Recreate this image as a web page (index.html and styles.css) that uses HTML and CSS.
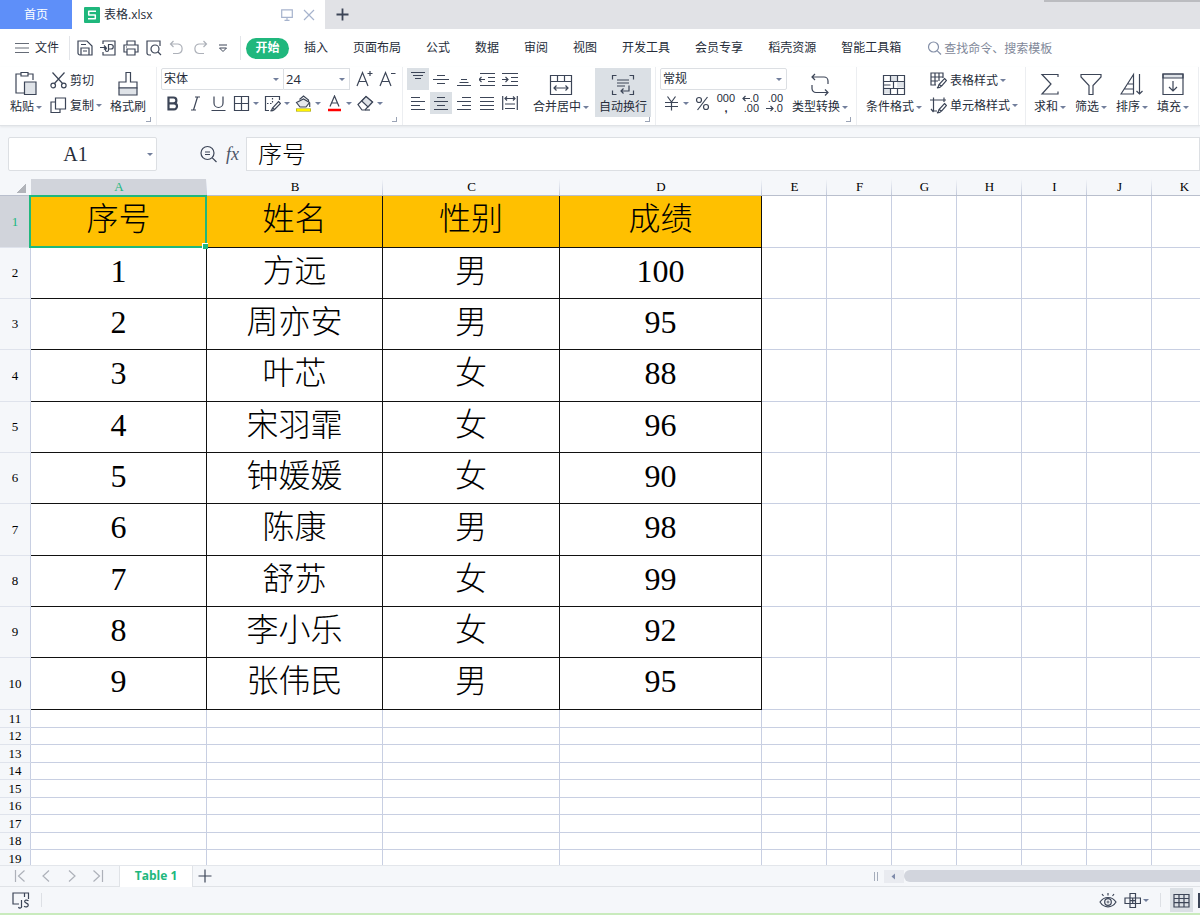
FILE: index.html
```html
<!DOCTYPE html>
<html lang="zh-CN">
<head>
<meta charset="utf-8">
<title>表格.xlsx</title>
<link rel="stylesheet" href="styles.css">
</head>
<body>
<header class="tabs">
  <button class="home-tab">首页</button>
  <div class="doc-tab">
    <svg class="logo" width="16" height="16" viewBox="0 0 16 16"><rect width="16" height="16" rx="1" fill="#1fb77c"/><path d="M12 4.200H4.700V8H11.300V11.800H4" fill="none" stroke="#fff" stroke-width="1.500" stroke-linejoin="round"/></svg>
    <span class="doc-name">表格.xlsx</span>
    <button class="plain" aria-label="窗口"><svg class="ic pale" width="12" height="12" viewBox="0 0 12 12"><path d="M.7.8h10.600v7.500H.7zM6 8.300v2.900M3.500 11.300h5"/></svg></button>
    <button class="plain" aria-label="关闭"><svg class="ic pale" width="12" height="12" viewBox="0 0 12 12"><path d="M1 1l10 10M11 1L1 11"/></svg></button>
  </div>
  <button class="plain new-tab" aria-label="新建"><svg class="ic" width="13" height="13" viewBox="0 0 13 13"><path d="M6.500.5v12M.5 6.500h12" stroke-width="1.800"/></svg></button>
  <div class="edge"></div>
</header>

<nav class="menu">
  <button class="file"><svg class="ic gray" width="14" height="12" viewBox="0 0 14 12"><path d="M0 1.500h14M0 6h14M0 10.500h14"/></svg>文件</button>
  <div class="quick">
    <button aria-label="保存"><svg class="ic" width="16" height="16" viewBox="0 0 16 16"><path d="M1 1h9l5 5v9H3a2 2 0 0 1-2-2zM4 15V8h8v7M4 4.500h5M6 11h4"/></svg></button>
    <button aria-label="输出PDF"><svg class="ic" width="16" height="16" viewBox="0 0 16 16"><path d="M3 4V1h12v14H3v-3M0 7.500h6M4 5.500l2 2-2 2M8 4.500h3a2 2 0 0 1 0 4.500H8.500M8.500 4.500v5.500a1.500 1.500 0 1 1-1.500-1.500"/></svg></button>
    <button aria-label="打印"><svg class="ic" width="16" height="16" viewBox="0 0 16 16"><path d="M4 5V1h8v4M4 12H1V5h14v7h-3M4 9h8v6H4zM3 7h1"/></svg></button>
    <button aria-label="打印预览"><svg class="ic" width="16" height="16" viewBox="0 0 16 16"><path d="M5 15H3a2 2 0 0 1-2-2V1h13v5M12 12l3 3"/><circle cx="9" cy="9" r="4"/></svg></button>
    <button aria-label="撤销"><svg class="ic faint" width="16" height="16" viewBox="0 0 16 16"><path d="M4.500 1L1.500 4l3 3M1.500 4H9a4.800 4.800 0 0 1 0 9.500H4"/></svg></button>
    <button aria-label="恢复"><svg class="ic faint" width="16" height="16" viewBox="0 0 16 16"><path d="M11.500 1l3 3-3 3M14.500 4H7a4.800 4.800 0 0 0 0 9.500h5"/></svg></button>
    <button aria-label="自定义"><svg class="ic" width="16" height="16" viewBox="0 0 16 16"><path d="M4 5h8M4.500 8h7L8 11.500z" stroke-width="1"/></svg></button>
  </div>
  <div class="menu-items">
    <button class="current">开始</button><button>插入</button><button>页面布局</button><button>公式</button><button>数据</button><button>审阅</button><button>视图</button><button>开发工具</button><button>会员专享</button><button>稻壳资源</button><button>智能工具箱</button>
  </div>
  <label class="search"><svg class="ic slate" width="16" height="16" viewBox="0 0 16 16"><circle cx="6.500" cy="7" r="5"/><path d="M10.300 10.800l3.700 3.700"/></svg><input type="text" placeholder="查找命令、搜索模板" aria-label="查找命令"></label>
</nav>

<section class="ribbon">
  <div class="group clip">
    <button class="big"><svg class="ic" width="24" height="26" viewBox="0 0 24 26"><path d="M7 3H2v19h8M14 3h5v6"/><path d="M7 1.500h7V5H7z"/><path d="M10.500 11h11.500v12.500H10.500z" fill="#dfe3e8"/></svg><span class="drop">粘贴</span></button>
    <div class="stack">
      <button><svg class="ic" width="17" height="17" viewBox="0 0 17 17"><path d="M2.500.5l10.500 11.500M14.500.5L4 12"/><circle cx="3.200" cy="13.500" r="2.300"/><circle cx="13.800" cy="13.500" r="2.300"/></svg>剪切</button>
      <button><svg class="ic" width="17" height="17" viewBox="0 0 17 17"><path d="M5.500 1h10v11h-10zM5.500 5H1v10.500h9V12"/></svg><span class="drop">复制</span></button>
    </div>
    <button class="big"><svg class="ic" width="22" height="26" viewBox="0 0 22 26"><path d="M9 1.500h4.500V11h6.500v6H2v-6h7z"/><path d="M2 17h18v7H2z" fill="#dfe3e8"/></svg>格式刷</button>
    <i class="launch"></i>
  </div>

  <div class="group font">
    <div class="line">
      <label class="pick face"><select aria-label="字体"><option>宋体</option></select></label><label class="pick size"><select aria-label="字号"><option>24</option></select></label>
      <button aria-label="增大字号"><svg class="ic" width="18" height="18" viewBox="0 0 18 18"><path d="M2 16L7.500 2.500 13 16M4 11.500h7M12.500 3.500h5M15 1v5"/></svg></button>
      <button aria-label="减小字号"><svg class="ic" width="18" height="18" viewBox="0 0 18 18"><path d="M2 16L7.500 2.500 13 16M4 11.500h7M13 3.500h4.500"/></svg></button>
    </div>
    <div class="line tools">
      <button aria-label="加粗"><svg class="ic" width="17" height="17" viewBox="0 0 17 17"><path d="M4.500 2.500h5a2.800 2.800 0 0 1 0 5.800h-5zM4.500 8.300H10a3 3 0 0 1 0 6H4.500z" stroke-width="2.200"/></svg></button>
      <button aria-label="斜体"><svg class="ic" width="17" height="17" viewBox="0 0 17 17"><path d="M8 2h5M4 15h5M10.500 2L6.500 15"/></svg></button>
      <button aria-label="下划线"><svg class="ic" width="17" height="17" viewBox="0 0 17 17"><path d="M4 1.500V8a4.500 4.500 0 0 0 9 0V1.500M1.500 15.500h14"/></svg></button>
      <button class="wide" aria-label="边框"><svg class="ic" width="17" height="17" viewBox="0 0 17 17"><path d="M1.500 1.500h14v14h-14zM8.500 1.500v14M1.500 8.500h14"/></svg></button>
      <button class="wide" aria-label="绘图边框"><svg class="ic" width="17" height="17" viewBox="0 0 17 17"><path d="M5 15.500H1.500v-14h14V5"/><path d="M8.500 3v6M3 8.500h6" stroke-dasharray="1.500 1.500"/><path d="M14.500 6.500l2 2-6 6c-1 1-2 1.500-4 1.500 1.500-.5 1.500-1.500 2-3zM8.500 13l2 1.500"/></svg></button>
      <button class="wide" aria-label="填充颜色"><svg class="ic" width="17" height="17" viewBox="0 0 17 17"><path d="M4.500 4.500L8.500 1l5 4v2.500"/><path d="M1.500 7.500l7-3.500 6 3.500-3.500 4.500H5z" fill="#e6e9ed"/><path d="M14.700 8v4"/><path d="M1 15h15" stroke="#8a8a20" stroke-width="3"/><path d="M1.500 15h14" stroke="#fff200" stroke-width="2.400"/></svg></button>
      <button class="wide" aria-label="字体颜色"><svg class="ic" width="17" height="17" viewBox="0 0 17 17"><path d="M4 11.500L8.500 1 13 11.500M5.500 8h6"/><path d="M2 15h13" stroke="#f00" stroke-width="2.500"/></svg></button>
      <button class="wide" aria-label="清除"><svg class="ic" width="17" height="17" viewBox="0 0 17 17"><path d="M1 9.500L9 1.500l6.500 5.500-7.500 8H5z"/><path d="M9 1.500L15.500 7 11 12 4.700 6z" fill="#dfe3e8"/><path d="M8 15h5"/></svg></button>
    </div>
    <i class="launch"></i>
  </div>

  <div class="group align">
    <div class="align-grid">
      <button class="on" aria-label="顶端对齐"><svg class="ic" width="16" height="16" viewBox="0 0 16 16"><path d="M1 1.500h14M3 4.500h10M5 7.500h6"/></svg></button>
      <button aria-label="垂直居中"><svg class="ic" width="16" height="16" viewBox="0 0 16 16"><path d="M4 4.500h8M0 8.500h16M4 12.500h8"/></svg></button>
      <button aria-label="底端对齐"><svg class="ic" width="16" height="16" viewBox="0 0 16 16"><path d="M5 8.500h6M3.500 11.500h9M1 14.500h14"/></svg></button>
      <button aria-label="减少缩进"><svg class="ic" width="16" height="16" viewBox="0 0 16 16"><path d="M1 2.500h15M9 6.500h7M9 10.500h7M1 14.500h15M0 8.500h6M2.500 6L0 8.500 2.500 11"/></svg></button>
      <button aria-label="增加缩进"><svg class="ic" width="16" height="16" viewBox="0 0 16 16"><path d="M0 2.500h16M9 6.500h7M9 10.500h7M0 14.500h16M0 8.500h6M3.500 6L6 8.500 3.500 11"/></svg></button>
      <button aria-label="左对齐"><svg class="ic" width="16" height="16" viewBox="0 0 16 16"><path d="M1 2.500h9M1 6.500h14M1 10.500h9M1 14.500h14"/></svg></button>
      <button class="on" aria-label="水平居中"><svg class="ic" width="16" height="16" viewBox="0 0 16 16"><path d="M4 2.500h8M1 6.500h14M4 10.500h8M1 14.500h14"/></svg></button>
      <button aria-label="右对齐"><svg class="ic" width="16" height="16" viewBox="0 0 16 16"><path d="M6 2.500h9M1 6.500h14M6 10.500h9M1 14.500h14"/></svg></button>
      <button aria-label="两端对齐"><svg class="ic" width="16" height="16" viewBox="0 0 16 16"><path d="M1 2.500h14M1 6.500h14M1 10.500h14M1 14.500h14"/></svg></button>
      <button aria-label="分散对齐"><svg class="ic" width="16" height="16" viewBox="0 0 16 16"><path d="M.7 1v14M15.300 1v14M3 3.500h10M5 1.500l-2 2 2 2M11 1.500l2 2-2 2M3 9h10M3 13.500h10"/></svg></button>
    </div>
    <button class="big merge"><svg class="ic" width="24" height="26" viewBox="0 0 24 26"><path d="M1.500 4.500h21v19h-21zM1.500 10.500h21M8.500 4.500v6M15.500 4.500v6M5 17h14M7.500 14.500L5 17l2.500 2.500M16.500 14.500L19 17l-2.500 2.500"/></svg><span class="drop">合并居中</span></button>
    <button class="big on wrap"><svg class="ic" width="24" height="26" viewBox="0 0 24 26"><path d="M5.500 4.500h-4v4M18.500 4.500h4v4M1.500 19.500v4h4M22.500 19.500v4h-4M6 9h12M6 12h12M6 15h8M18 14.500V20h-8M12.500 17.500L10 20l2.500 2.500"/></svg>自动换行</button>
    <i class="launch"></i>
  </div>

  <div class="group number">
    <div class="num-col">
      <label class="pick format"><select aria-label="数字格式"><option>常规</option></select></label>
      <div class="line numbers">
        <button class="wide" aria-label="货币"><svg class="ic" width="17" height="17" viewBox="0 0 17 17"><path d="M4.500 1.500l4 5.500 4-5.500M8.500 7v8.500M2 7.500h13M2 11.500h13"/></svg></button>
        <button aria-label="百分比"><svg class="ic" width="17" height="17" viewBox="0 0 17 17"><circle cx="5" cy="5" r="2.500"/><circle cx="12" cy="12" r="2.500"/><path d="M13.500 2L3.500 15"/></svg></button>
        <button class="digits"><span>000</span><b>,</b></button>
        <button class="digits"><span><svg class="ic" width="8" height="7" viewBox="0 0 8 7"><path d="M8 3.500H1M3.500 1L1 3.500 3.500 6"/></svg>.0</span><span>.00</span></button>
        <button class="digits"><span>.00</span><span><svg class="ic" width="8" height="7" viewBox="0 0 8 7"><path d="M0 3.500h7M4.500 1L7 3.500 4.500 6"/></svg>.0</span></button>
      </div>
    </div>
    <button class="big"><svg class="ic" width="24" height="26" viewBox="0 0 24 26"><path d="M7 3L4 6l3 3M4 6h12a4 4 0 0 1 4 4v3M17 18.500l3 3-3 3M20 21.500H8a4 4 0 0 1-4-4V14"/></svg><span class="drop">类型转换</span></button>
    <i class="launch"></i>
  </div>

  <div class="group style">
    <button class="big"><svg class="ic" width="24" height="26" viewBox="0 0 24 26"><path d="M8 4.500h7v6H8zM15 10.500h7v6h-7zM2 16.500h6v6H2z" fill="#dfe3e8" stroke="none"/><path d="M1.500 4.500h21v19h-21zM1.500 10.500h21M1.500 14h7M1.500 17.500h21M8.500 4.500v6M15.500 4.500v6M11.500 10.500v7M8.500 17.500v6M15.500 17.500v6"/></svg><span class="drop">条件格式</span></button>
    <div class="stack">
      <button><svg class="ic" width="17" height="17" viewBox="0 0 17 17"><path d="M6 13H1V1h12v5M1 5h12M1 9h7M5 1v12M9 1v8"/><path d="M14.500 6.500l2 2-5 5.500c-1 1.500-2.500 2-4.500 2 1.500-.5 1.500-2 2-3.500zM9 12.500l2.500 1.500"/></svg><span class="drop">表格样式</span></button>
      <button><svg class="ic" width="17" height="17" viewBox="0 0 17 17"><path d="M3.500.5V14H7M0 3h16M14 .5V5M1 12l2.500 3"/><path d="M14.500 6.500l2 2-5 5.500c-1 1.500-2.500 2-4.500 2 1.500-.5 1.500-2 2-3.500zM9 12.500l2.500 1.500"/></svg><span class="drop">单元格样式</span></button>
    </div>
  </div>

  <div class="group edit">
    <button class="big"><svg class="ic" width="24" height="26" viewBox="0 0 24 26"><path d="M20 6V3.500H4L13 13 4 23h16v-2.500"/></svg><span class="drop">求和</span></button>
    <button class="big"><svg class="ic" width="24" height="26" viewBox="0 0 24 26"><path d="M2 3.500h20V6l-8 8.500v9h-4v-9L2 6z"/></svg><span class="drop">筛选</span></button>
    <button class="big"><svg class="ic" width="24" height="26" viewBox="0 0 24 26"><path d="M1 23L13.500 3.500V23zM4.500 18h9M8 13h5.500M19.500 3v20M16.500 20l3 3 3-3"/></svg><span class="drop">排序</span></button>
    <button class="big"><svg class="ic" width="24" height="26" viewBox="0 0 24 26"><path d="M2 3h20v4H2z" fill="#dfe3e8"/><path d="M2 3h20v20.500H2zM12 10v10M8 16l4 4 4-4"/></svg><span class="drop">填充</span></button>
  </div>
</section>

<section class="formula">
  <label class="pick name"><input type="text" value="A1" aria-label="名称框"></label>
  <div class="fx">
    <button class="plain" aria-label="查看"><svg class="ic" width="18" height="18" viewBox="0 0 18 18"><circle cx="7.500" cy="8" r="6.500"/><path d="M12.300 12.800l4.200 4.200M5 7h5M5 9.500h5"/></svg></button>
    <button class="plain fn">fx</button>
  </div>
  <input class="content" type="text" value="序号" aria-label="编辑栏">
</section>

<main class="sheet">
<table>
<colgroup><col class="c-head"><col class="c-name"><col class="c-name"><col class="c-sex"><col class="c-score"><col class="c-rest" span="7"></colgroup>
<thead><tr><th class="corner"></th><th class="picked">A</th><th>B</th><th>C</th><th>D</th><th>E</th><th>F</th><th>G</th><th>H</th><th>I</th><th>J</th><th>K</th></tr></thead>
<tbody class="data">
<tr class="title"><th class="picked">1</th><td class="cursor">序号</td><td>姓名</td><td>性别</td><td>成绩</td><td></td><td></td><td></td><td></td><td></td><td></td><td></td></tr>
<tr><th>2</th><td>1</td><td>方远</td><td>男</td><td>100</td><td></td><td></td><td></td><td></td><td></td><td></td><td></td></tr>
<tr><th>3</th><td>2</td><td>周亦安</td><td>男</td><td>95</td><td></td><td></td><td></td><td></td><td></td><td></td><td></td></tr>
<tr><th>4</th><td>3</td><td>叶芯</td><td>女</td><td>88</td><td></td><td></td><td></td><td></td><td></td><td></td><td></td></tr>
<tr><th>5</th><td>4</td><td>宋羽霏</td><td>女</td><td>96</td><td></td><td></td><td></td><td></td><td></td><td></td><td></td></tr>
<tr><th>6</th><td>5</td><td>钟媛媛</td><td>女</td><td>90</td><td></td><td></td><td></td><td></td><td></td><td></td><td></td></tr>
<tr><th>7</th><td>6</td><td>陈康</td><td>男</td><td>98</td><td></td><td></td><td></td><td></td><td></td><td></td><td></td></tr>
<tr><th>8</th><td>7</td><td>舒苏</td><td>女</td><td>99</td><td></td><td></td><td></td><td></td><td></td><td></td><td></td></tr>
<tr><th>9</th><td>8</td><td>李小乐</td><td>女</td><td>92</td><td></td><td></td><td></td><td></td><td></td><td></td><td></td></tr>
<tr><th>10</th><td>9</td><td>张伟民</td><td>男</td><td>95</td><td></td><td></td><td></td><td></td><td></td><td></td><td></td></tr>
</tbody>
<tbody class="empty">
<tr><th>11</th><td></td><td></td><td></td><td></td><td></td><td></td><td></td><td></td><td></td><td></td><td></td></tr>
<tr><th>12</th><td></td><td></td><td></td><td></td><td></td><td></td><td></td><td></td><td></td><td></td><td></td></tr>
<tr><th>13</th><td></td><td></td><td></td><td></td><td></td><td></td><td></td><td></td><td></td><td></td><td></td></tr>
<tr><th>14</th><td></td><td></td><td></td><td></td><td></td><td></td><td></td><td></td><td></td><td></td><td></td></tr>
<tr><th>15</th><td></td><td></td><td></td><td></td><td></td><td></td><td></td><td></td><td></td><td></td><td></td></tr>
<tr><th>16</th><td></td><td></td><td></td><td></td><td></td><td></td><td></td><td></td><td></td><td></td><td></td></tr>
<tr><th>17</th><td></td><td></td><td></td><td></td><td></td><td></td><td></td><td></td><td></td><td></td><td></td></tr>
<tr><th>18</th><td></td><td></td><td></td><td></td><td></td><td></td><td></td><td></td><td></td><td></td><td></td></tr>
<tr><th>19</th><td></td><td></td><td></td><td></td><td></td><td></td><td></td><td></td><td></td><td></td><td></td></tr>
</tbody>
</table>
</main>

<section class="sheet-tabs">
  <div class="steps">
    <button class="plain" aria-label="第一个"><svg class="ic faint" width="12" height="14" viewBox="0 0 12 14"><path d="M1.500 1v12M10.500 1.500L4.500 7l6 5.500"/></svg></button>
    <button class="plain" aria-label="上一个"><svg class="ic faint" width="12" height="14" viewBox="0 0 12 14"><path d="M9 1.500L3 7l6 5.500"/></svg></button>
    <button class="plain" aria-label="下一个"><svg class="ic faint" width="12" height="14" viewBox="0 0 12 14"><path d="M3 1.500L9 7l-6 5.500"/></svg></button>
    <button class="plain" aria-label="最后一个"><svg class="ic faint" width="12" height="14" viewBox="0 0 12 14"><path d="M10.500 1v12M1.500 1.500l6 5.500-6 5.500"/></svg></button>
  </div>
  <button class="sheet-tab">Table 1</button>
  <button class="plain add" aria-label="新建工作表"><svg class="ic" width="14" height="14" viewBox="0 0 14 14"><path d="M7 .5v13M.5 7h13"/></svg></button>
  <div class="scroll">
    <i class="grip"></i>
    <button class="plain arrow" aria-label="向左滚动"><svg width="20" height="13" viewBox="0 0 20 13"><path d="M11 3.500v6L7.500 6.500z" fill="#7f8bab"/></svg></button>
    <div class="thumb"></div>
  </div>
</section>

<footer class="status">
  <button class="plain" aria-label="JS宏"><svg class="ic" width="18" height="17" viewBox="0 0 18 17"><path d="M7 12H1V1h13M12.500 5V1h4v6M16.500 1v6"/><path d="M9.500 8v6a1.500 1.500 0 0 1-3 1M16.500 8.700c-2-1.200-4-.5-3.800 1 .2 1.600 3.500 1.300 3.600 3.300 0 2-2.600 2.500-4.300 1.300"/></svg></button>
  <i class="bar"></i>
  <div class="views">
    <button class="plain" aria-label="护眼模式"><svg class="ic" width="18" height="17" viewBox="0 0 18 17"><path d="M1 10c4-6 12-6 16 0-4 6.500-12 6.500-16 0zM9 1v2.500M3 2l1.500 2M15 2l-1.500 2"/><circle cx="9" cy="10" r="3.300"/><circle cx="9" cy="10" r="1" stroke-width=".8"/></svg></button>
    <button class="plain drop" aria-label="阅读模式"><svg class="ic" width="17" height="17" viewBox="0 0 17 17"><path d="M6 1.500h5.500v14H6zM1 6h15.500v5.500H1zM8.700 6v5.500M6 8.700h5.500"/></svg></button>
    <i class="bar"></i>
    <button class="plain grid-view" aria-label="普通视图"><svg class="ic" width="17" height="15" viewBox="0 0 17 15"><path d="M1 1.500h15v12.500H1zM1 5.500h15M1 9.700h15M6 1.500v12.500M11 1.500v12.500"/></svg></button>
    <button class="plain page-view" aria-label="分页预览"></button>
  </div>
</footer>
</body>
</html>
```
FILE: styles.css
```css
* { box-sizing: border-box; }

body {
  margin: 0;
  height: 100vh;
  display: flex;
  flex-direction: column;
  overflow: hidden;
  background: #f5f7fa;
  color: #262d3a;
  font: 12px/18px "Open Sans", "Noto Sans CJK SC", sans-serif;
}

button, input, select {
  margin: 0;
  padding: 0;
  border: 0;
  background: none;
  color: inherit;
  font: inherit;
}

button {
  display: inline-flex;
  align-items: center;
  justify-content: center;
  white-space: nowrap;
}

svg { display: block; flex: none; }
.ic { fill: none; stroke: #3c4557; stroke-width: 1.2; }
.ic.pale { stroke: #a6b3cd; }
.ic.faint { stroke: #adb1b9; }
.ic.gray { stroke: #666c77; }
.ic.slate { stroke: #8590a8; }

/* window tabs */
.tabs { flex: none; display: flex; height: 29px; background: #e1e2e6; position: relative; }
.home-tab { width: 72px; background: #5e8ff9; color: #fff; }
.doc-tab { display: flex; align-items: center; gap: 10px; width: 253px; padding: 0 10px 0 12px; background: #fff; }
.doc-name { flex: 1; margin-left: -6px; }
.new-tab { width: 34px; }
.edge { position: absolute; top: 0; right: 0; width: 13%; height: 2px; background: #bbbcc0; }

/* menu bar */
.menu { flex: none; display: flex; align-items: center; height: 38px; background: #fff; }
.file { gap: 6px; width: 70px; padding-left: 5px; height: 24px; border-right: 1px solid #e3e5e9; }
.quick { display: flex; align-items: center; gap: 7px; width: 171px; height: 24px; padding-left: 7px; border-right: 1px solid #e3e5e9; }
.menu-items { display: flex; align-items: center; gap: 25px; margin-left: 5px; }
.menu-items .current { width: 43px; height: 21px; margin-right: -10px; border-radius: 11px; background: #20b77d; color: #fff; font-weight: 700; }
.search { display: flex; align-items: center; gap: 1px; flex: 1; margin-left: 26px; }
.search input { width: 100%; height: 20px; }
.search input::placeholder { color: #7f8899; opacity: 1; }

/* ribbon */
.ribbon { flex: none; display: flex; height: 59px; background: #fff; border-bottom: 1px solid #dfe2e6; box-shadow: 0 1px 2px #e3e6ea; }
.group { position: relative; flex: none; display: flex; align-items: flex-start; padding-top: 1px; border-right: 1px solid #eceef1; }
.clip { width: 157px; padding-left: 10px; gap: 8px; }
.font { width: 246px; padding-left: 4px; flex-direction: column; gap: 2px; }
.align { width: 253px; padding-left: 4px; }
.number { width: 201px; padding-left: 4px; gap: 5px; }
.style { width: 169px; padding-left: 9px; gap: 8px; }
.edit { width: 173px; padding-left: 8px; gap: 9px; }
.launch { position: absolute; right: 5px; bottom: 3px; width: 5px; height: 5px; border: solid #9aa3b5; border-width: 0 1px 1px 0; }

.drop { display: inline-flex; align-items: center; gap: 2px; }
.drop::after, .wide::after, .pick::after {
  content: "";
  border: solid transparent;
  border-width: 3px 3px 0;
  border-top-color: #727f9c;
}
.big { flex-direction: column; height: 49px; padding-top: 1px; }
.big svg { height: 28px; }
.on { background: #dbe0e5; }
.stack { display: flex; flex-direction: column; }
.stack button { justify-content: flex-start; gap: 3px; height: 25px; }
.line { display: flex; align-items: center; height: 22px; }
.line button { width: 23px; height: 22px; }
.line .wide { width: 31px; gap: 3px; }

.pick { position: relative; display: block; height: 22px; border: 1px solid #dcdfe3; background: #fff; }
.pick::after { position: absolute; right: 4px; top: 9px; }
.pick select { appearance: none; display: block; width: 100%; height: 20px; padding-left: 2px; }
.face { width: 123px; border-radius: 2px 0 0 2px; }
.size { width: 66px; margin-right: 2px; border-left: 0; }
.pick.size select { font-size: 13px; }
.format { width: 127px; border-radius: 2px; }

.align-grid { display: grid; grid-template-columns: repeat(5, 22px); gap: 2px 1px; }
.align-grid button { height: 22px; }
.merge { margin: 0 6px 0 12px; }
.wrap { width: 56px; }
.num-col { display: grid; gap: 2px; }
.numbers .digits { flex-direction: column; width: 24px; font: 11px/10px "Liberation Sans", sans-serif; }
.digits span { display: flex; align-items: center; justify-content: flex-end; width: 18px; }

/* formula bar */
.formula { flex: none; display: flex; align-items: center; height: 53px; padding: 3px 0 0 8px; }
.name { width: 149px; height: 34px; border-radius: 2px; }
.pick.name::after { right: 3px; top: 15px; }
.name input { width: 100%; height: 32px; padding-right: 14px; text-align: center; font: 20px "Liberation Serif", serif; }
.fx { display: flex; align-items: center; justify-content: flex-end; gap: 8px; width: 82px; }
.fn { font: italic 18px "Liberation Serif", serif; color: #4c5568; }
.content { flex: 1; height: 34px; margin-left: 7px; padding: 0 0 3px 11px; border: 1px solid #dcdfe3; background: #fff; font: 300 24px "Liberation Serif", "Noto Sans CJK SC", serif; color: #000; }

/* worksheet */
.sheet { flex: 1; min-height: 0; overflow: hidden; background: #fff; }
table { width: 1216px; table-layout: fixed; border-collapse: separate; border-spacing: 0; color: #000; }
.c-head { width: 31px; }
.c-name { width: 176px; }
.c-sex { width: 177px; }
.c-score { width: 202px; }
.c-rest { width: 65px; }
th, td { padding: 0; border: solid #c8cfe2; border-width: 0 1px 1px 0; text-align: center; overflow: hidden; }
th { background: #f5f7fa; font: 13px/16px "Liberation Serif", serif; }
thead th { height: 17px; border-right: 0; border-bottom-color: #b9bfcd; background: linear-gradient(#f5f7fa, #c3cadb) right / 1px 100% no-repeat #f5f7fa; }
tbody th { border-bottom-color: #dfe3ec; }
th.picked { background-color: #d1d4db; color: #20b77d; }
thead .corner { background: linear-gradient(135deg, transparent 50%, #b1b4ba 50%) 17px 5px / 9px 9px no-repeat #f5f7fa; }
.data tr { height: 51px; }
.data tr:nth-child(3n+1) { height: 52px; }
.data td { padding-bottom: 5px; font: 300 32px/40px "Liberation Serif", "Noto Sans CJK SC", serif; }
.data td:nth-child(-n+5) { border-color: #111; }
.title td:nth-child(-n+5) { background: #ffc000; }
td.cursor { position: relative; overflow: visible; }
.cursor::before { content: ""; position: absolute; inset: -1px -1px -1px -2px; border: 2px solid #20b77d; }
.cursor::after { content: ""; position: absolute; right: -2px; bottom: -2px; width: 5px; height: 5px; border: solid #fff; border-width: 1px 0 0 1px; background: #20b77d; }
.empty tr { height: 17px; }
.empty tr:nth-child(odd) { height: 18px; }

/* sheet tabs */
.sheet-tabs { flex: none; display: flex; align-items: center; height: 22px; border-top: 1px solid #e3e6eb; border-bottom: 1px solid #e0e3e7; }
.steps { display: flex; align-items: center; gap: 14px; width: 119px; padding-left: 14px; }
.sheet-tab { width: 74px; height: 21px; border: solid #e0e3e7; border-width: 0 1px; background: #fff; color: #20b77d; font-weight: 700; }
.add { margin-left: 5px; }
.scroll { flex: 1; display: flex; align-items: center; margin-left: 55%; padding-left: 2px; }
.grip { width: 4px; height: 9px; margin-right: 6px; border: solid #a5adbb; border-width: 0 1px; }
.arrow { background: #e9ebf0; }
.thumb { flex: 1; height: 12px; border-radius: 6px 0 0 6px; background: #d2d5dd; }

/* status bar */
.status { flex: none; display: flex; align-items: center; height: 28px; padding-left: 12px; border-bottom: 2px solid #c9ebbd; }
.bar { width: 1px; height: 14px; margin-left: 11px; background: #dde0e5; }
.views { display: flex; align-items: center; margin-left: auto; }
.views .drop { margin-left: 7px; }
.grid-view { width: 23px; height: 24px; margin: 0 5px 0 9px; background: #dbe0e5; }
.page-view { width: 2px; height: 15px; background: #3c4557; }
```
